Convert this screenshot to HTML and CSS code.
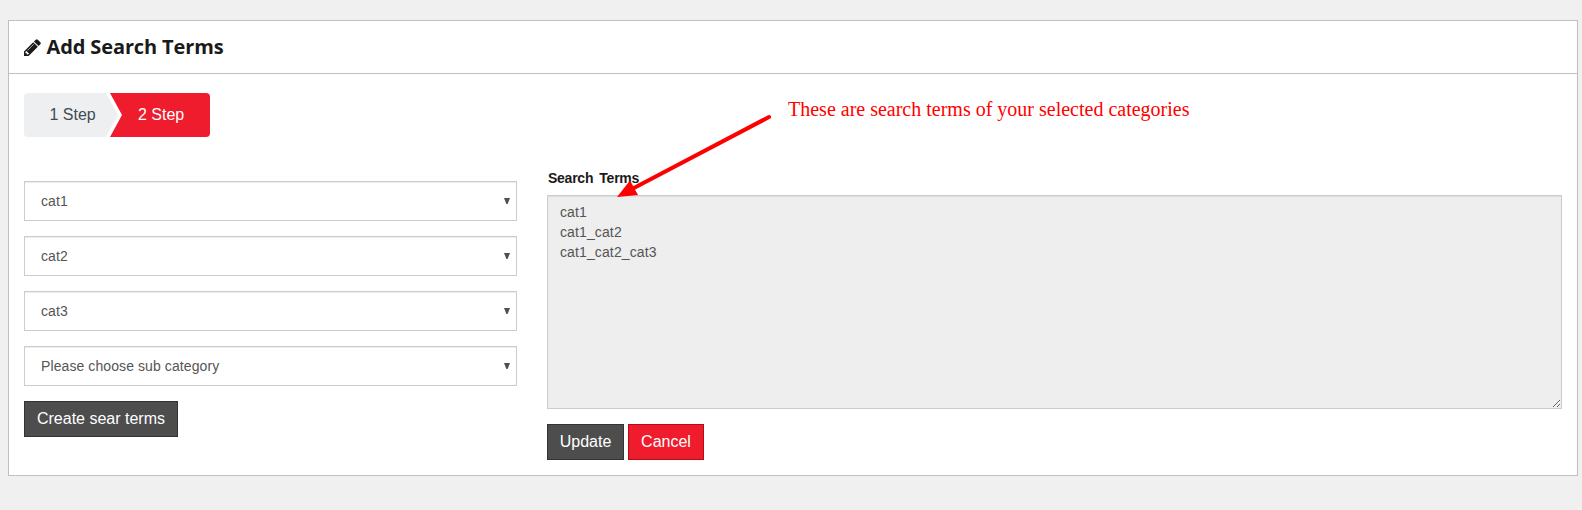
FILE: index.html
```html
<!DOCTYPE html>
<html lang="en">
<head>
<meta charset="utf-8">
<title>Add Search Terms</title>
<link rel="stylesheet" href="styles.css">
</head>
<body>
<main class="panel">
  <header class="panel-header">
    <svg class="pencil" viewBox="0 0 1536 1536"><path fill="#1a1a1a" fill-rule="evenodd" d="M363 1408l91-91-235-235-91 91v107h128v128zM886 480q0-22-22-22-10 0-17 7L305 1007q-7 7-7 17 0 22 22 22 10 0 17-7L879 497q7-7 7-17zM832 288l416 416-832 832H0v-416zM1515 384q0 53-37 90l-166 166-416-416 166-165q36-38 90-38 53 0 91 38l235 234q37 39 37 91z"/></svg>
    <h1 class="title">Add Search Terms</h1>
  </header>
  <div class="panel-body">
    <nav class="steps">
      <span class="step">1 Step</span>
      <span class="step active">2 Step</span>
    </nav>
    <div class="columns">
      <section class="categories">
        <div class="select"><span>cat1</span><i class="caret"></i></div>
        <div class="select"><span>cat2</span><i class="caret"></i></div>
        <div class="select"><span>cat3</span><i class="caret"></i></div>
        <div class="select"><span>Please choose sub category</span><i class="caret"></i></div>
        <button class="btn create">Create sear terms</button>
      </section>
      <section class="terms">
        <label class="label" for="terms">Search Terms</label>
        <textarea class="textarea" id="terms" readonly>cat1
cat1_cat2
cat1_cat2_cat3</textarea>
        <div class="actions">
          <button class="btn update">Update</button>
          <button class="btn cancel">Cancel</button>
        </div>
      </section>
    </div>
  </div>
</main>
<svg class="arrow" width="180" height="90" viewBox="0 0 180 90"><path d="M169 7L32 79" stroke="#f00" stroke-width="4" stroke-linecap="round"/><path d="M17 87L30 70.500L38 85z" fill="#f00"/></svg>
<p class="note">These are search terms of your selected categories</p>
</body>
</html>
```
FILE: styles.css
```css
* { box-sizing: border-box; }
body {
  margin: 0;
  padding: 20px 4px 0 8px;
  height: 510px;
  overflow: hidden;
  background: #f0f0f0;
  font-family: "Liberation Sans", Arial, sans-serif;
}
.panel {
  height: 456px;
  border: 1px solid #bfbfbf;
  background: #fff;
}
.panel-header {
  display: flex;
  align-items: center;
  height: 53px;
  padding: 0 15px;
  border-bottom: 1px solid #bfbfbf;
}
.pencil { width: 17px; height: 17px; margin-right: 5.5px; }
.title {
  margin: 0;
  color: #1a1a1a;
  font: 700 20px/28px "Open Sans", sans-serif;
  letter-spacing: -0.12px;
}
.panel-body { padding: 19px 15px 0; }
.steps {
  display: flex;
  width: 186px;
  height: 44px;
  border-radius: 4px;
  overflow: hidden;
  font-size: 16px;
  line-height: 43px;
}
.step {
  width: 94px;
  padding-left: 25.5px;
  background: #edeff0;
  color: #3e4c54;
  clip-path: polygon(0 0, 82px 0, 94px 50%, 82px 100%, 0 100%);
}
.step.active {
  width: 100px;
  margin-left: -8px;
  padding-left: 28px;
  background: #ee1c2d;
  color: #fff;
  clip-path: polygon(0 0, 100% 0, 100% 100%, 0 100%, 12px 50%);
}
.columns { display: grid; grid-template-columns: 493px 1fr; gap: 30px; }
.categories { padding-top: 44px; }
.select {
  display: flex;
  align-items: center;
  justify-content: space-between;
  height: 40px;
  margin-bottom: 15px;
  padding: 0 6px 0 16px;
  border: 1px solid #ccc;
  background: #fff;
  box-shadow: inset 0 1px 1px rgba(0, 0, 0, .075);
  color: #555;
  font-size: 14px;
  letter-spacing: 0.09px;
}
.caret {
  width: 6px;
  height: 6px;
  background: #505050;
  clip-path: polygon(0 0, 100% 0, 60% 100%, 40% 100%);
}
.btn {
  display: block;
  height: 36px;
  padding: 0 0 1px;
  border: 1px solid #333;
  background: #4d4d4d;
  color: #fff;
  font: 16px "Liberation Sans", Arial, sans-serif;
}
.create { width: 154px; }
.update { width: 77px; }
.cancel { width: 76px; background: #ee1c2d; border-color: #b20d1b; }
.terms { padding-top: 31px; }
.label {
  display: block;
  height: 27px;
  padding-left: 1px;
  color: #1a1a1a;
  font-size: 14px;
  font-weight: 700;
  line-height: 20px;
  letter-spacing: -0.25px;
  word-spacing: 2.5px;
}
.textarea {
  display: block;
  width: 100%;
  height: 214px;
  margin: 0;
  padding: 6px 12px;
  border: 1px solid #ccc;
  border-radius: 0;
  background: #eee;
  box-shadow: inset 0 1px 1px rgba(0, 0, 0, .075);
  color: #555;
  font: 14px/20px "Liberation Sans", Arial, sans-serif;
  letter-spacing: 0.12px;
  outline: 0;
}
.actions { display: flex; gap: 4px; margin-top: 15px; }
.arrow { position: absolute; left: 600px; top: 110px; fill: none; }
.note {
  position: absolute;
  left: 788px;
  top: 98px;
  margin: 0;
  color: #f00;
  font: 20px/23px "Liberation Serif", "Times New Roman", serif;
  white-space: nowrap;
}
```
